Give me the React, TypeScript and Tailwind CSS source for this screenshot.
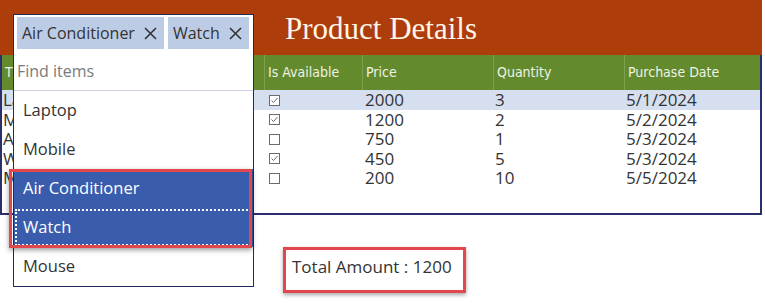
import React from "react";

type Row = { title: string; available: boolean; price: number; qty: number; date: string };

const rows: Row[] = [
  { title: "Laptop", available: true, price: 2000, qty: 3, date: "5/1/2024" },
  { title: "Mobile", available: true, price: 1200, qty: 2, date: "5/2/2024" },
  { title: "Air Conditioner", available: false, price: 750, qty: 1, date: "5/3/2024" },
  { title: "Watch", available: true, price: 450, qty: 5, date: "5/3/2024" },
  { title: "Mouse", available: false, price: 200, qty: 10, date: "5/5/2024" },
];

const items = ["Laptop", "Mobile", "Air Conditioner", "Watch", "Mouse"];
const selected = ["Air Conditioner", "Watch"];

const cols = "grid grid-cols-[262px_98px_131px_131px_1fr]";

function Check({ on }: { on: boolean }) {
  return (
    <svg width="11" height="11" viewBox="0 0 11 11" className="mt-[1px]">
      <rect x="0.5" y="0.5" width="10" height="10" fill="white" stroke="#6b6b6b" />
      {on && <path d="M2.5 5.5 L4.5 7.5 L8.5 3" fill="none" stroke="#6b6b6b" strokeWidth="1" />}
    </svg>
  );
}

function Cross() {
  return (
    <svg width="13" height="13" viewBox="0 0 13 13">
      <path d="M1 1 L12 12 M12 1 L1 12" stroke="#333" strokeWidth="1.6" />
    </svg>
  );
}

function Chip({ label }: { label: string }) {
  return (
    <div className="h-[32px] flex items-center gap-[9px] bg-[#bccce5] pl-[5px] pr-[7px]">
      {label} <Cross />
    </div>
  );
}

function Dropdown() {
  return (
    <div className="absolute left-[13px] top-[14px] w-[241px] bg-white border border-[#1f2a5c] font-['Open_Sans',sans-serif] text-[16px] text-[#333]">
      <div className="flex gap-[4px] px-[3px] pt-[2px] pb-[1px]">
        <Chip label="Air Conditioner" />
        <Chip label="Watch" />
      </div>
      <div className="h-[41px] flex items-center pl-[3px] pt-[2px] text-[#7a7a7a] border-b border-[#c9cfe0]">Find items</div>
      {items.map((it) => {
        const sel = selected.includes(it);
        return (
          <div
            key={it}
            className={
              "h-[39px] flex items-center pl-[9px] text-[16.5px] " +
              (sel ? "bg-[#3a5cad] text-white" : "") +
              (it === "Watch" ? " outline-2 outline-dotted outline-white -outline-offset-[3px]" : "")
            }
          >
            {it}
          </div>
        );
      })}
    </div>
  );
}

export default function App() {
  return (
    <div className="relative w-[765px] h-[303px] bg-white overflow-hidden">
      <div className="h-[55px] mr-[3px] bg-[#ad3e0c] flex items-center justify-center">
        <span className="font-['Liberation_Serif',serif] text-[31px] text-[#fff6e8] mt-[4px]">Product Details</span>
      </div>

      <div className="h-[160px] mr-[3px] border-l-2 border-r-2 border-b-2 border-[#2b2f6b]">
        <div className={cols + " h-[35px] bg-[#638b2e] text-[#eef3e4] font-['DejaVu_Sans_Condensed','DejaVu_Sans',sans-serif] text-[14px]"}>
          {["Title", "Is Available", "Price", "Quantity", "Purchase Date"].map((h, i) => (
            <div key={h} className={"flex items-center pl-[3px] " + (i > 0 ? "border-l border-[#7da24c]" : "")}>
              {h}
            </div>
          ))}
        </div>
        <div className="font-['Open_Sans',sans-serif] text-[17px] text-[#333] leading-[19.5px]">
          {rows.map((r, i) => (
            <div key={r.title} className={cols + " h-[19.5px] " + (i === 0 ? "bg-[#d6dff0]" : "")}>
              <div className="pl-[1px]">{r.title}</div>
              <div className="pl-[5px] flex items-center">
                <Check on={r.available} />
              </div>
              <div className="pl-[3px]">{r.price}</div>
              <div className="pl-[2px]">{r.qty}</div>
              <div className="pl-[2px]">{r.date}</div>
            </div>
          ))}
        </div>
      </div>

      <div className="ml-[283px] mt-[32px] w-[183px] h-[46px] border-[3px] border-[#e2474d] shadow-[0_2px_4px_rgba(0,0,0,0.35)] pl-[6px] pt-[4px] font-['Open_Sans',sans-serif] text-[17px] text-[#333]">
        Total Amount : 1200
      </div>

      <Dropdown />

      <div className="absolute left-[9px] top-[169px] w-[243px] h-[79px] border-[3px] border-[#e2474d] shadow-[0_2px_5px_rgba(0,0,0,0.4)]" />
    </div>
  );
}
